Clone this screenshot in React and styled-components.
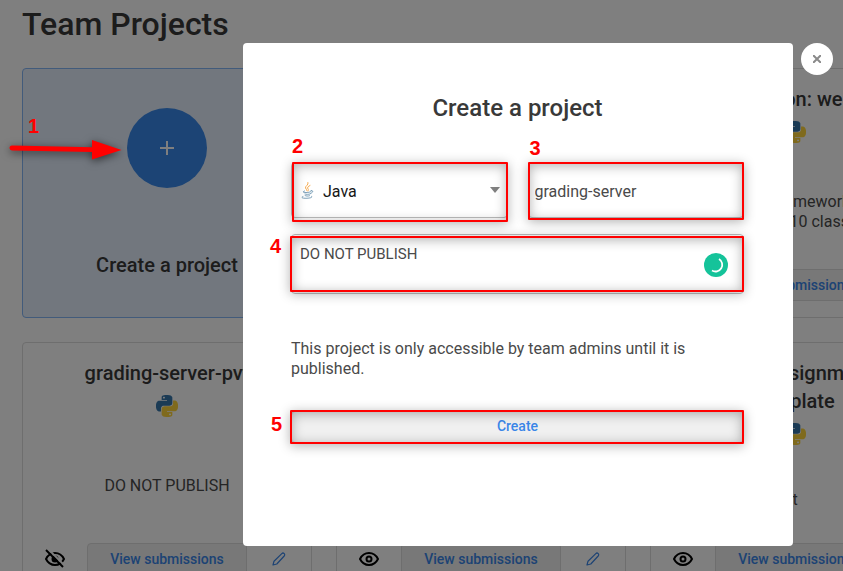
import React from 'react';
import styled, { createGlobalStyle, css } from 'styled-components';

const GlobalStyle = createGlobalStyle`
  * { box-sizing: border-box; }
  body {
    margin: 0;
    overflow: hidden;
    background: #ffffff;
    color: #393939;
    font-family: Roboto, "Liberation Sans", sans-serif;
    font-size: 16px;
    line-height: 20px;
  }
  button, input, select, textarea { font: inherit; color: inherit; margin: 0; }
`;

const BLUE = '#3a86e8';
const SOFT_TEXT = '#4a4a4a';

const Page = styled.div`
  position: relative;
  height: 100vh;
  overflow: hidden;
`;

const Projects = styled.main`
  padding: 4px 22px;
`;

const PageTitle = styled.h1`
  margin: 0 0 24px;
  font-size: 32px;
  line-height: 40px;
  font-weight: 500;
`;

const Grid = styled.div`
  display: grid;
  grid-template-columns: repeat(3, 290px);
  grid-auto-rows: 250px;
  gap: 24px;
`;

const cardFrame = css`
  display: flex;
  flex-direction: column;
  align-items: center;
  border: 1px solid #dcdcdc;
  border-radius: 4px;
  text-align: center;
`;

const CreateCard = styled.button`
  ${cardFrame}
  justify-content: space-between;
  padding: 39px 16px 38px;
  background: #e5effd;
  border-color: #84b6f6;
`;

const PlusCircle = styled.span`
  display: grid;
  place-items: center;
  width: 80px;
  height: 80px;
  border-radius: 50%;
  background: #3888ea;
`;

const CardTitle = styled.h2`
  margin: 0;
  padding: 0 16px;
  font-size: 20px;
  line-height: 28px;
  font-weight: 500;
  white-space: pre-line;
`;

const CreateLabel = styled.span`
  font-size: 20px;
  line-height: 28px;
  font-weight: 500;
`;

const Card = styled.article`
  ${cardFrame}
  padding-top: 16px;
`;

const Logo = styled.span`
  display: flex;
  margin-top: 8px;
`;

const CardText = styled.p`
  flex: 1;
  display: flex;
  align-items: center;
  margin: 0;
  padding: 12px 32px 0;
  color: ${SOFT_TEXT};
  white-space: pre-line;
`;

const CardFooter = styled.footer`
  display: grid;
  grid-template-columns: 64px 1fr 64px;
  align-self: stretch;
  height: 32px;
  margin-bottom: 16px;
`;

const IconButton = styled.button`
  display: grid;
  place-items: center;
  padding: 0;
  border: 0;
  background: none;
`;

const ViewLink = styled.a`
  border: 1px solid #dcdcdc;
  border-radius: 4px 4px 0 0;
  background: #f0f0f0;
  color: ${BLUE};
  font-size: 14px;
  line-height: 30px;
  font-weight: 500;
  text-decoration: none;
`;

const Overlay = styled.div`
  position: absolute;
  inset: 0;
  display: flex;
  align-items: flex-start;
  justify-content: flex-end;
  gap: 8px;
  padding: 43px 10px 24px;
  background: rgba(0, 0, 0, 0.5);
`;

const Dialog = styled.section`
  flex: 0 1 550px;
  padding: 49px 49px 103px 48px;
  border-radius: 4px;
  background: #ffffff;
`;

const CloseButton = styled.button`
  display: grid;
  place-items: center;
  width: 32px;
  height: 32px;
  padding: 0;
  border: 0;
  border-radius: 50%;
  background: #ffffff;
`;

const DialogTitle = styled.h2`
  margin: 0 0 38px;
  font-size: 24px;
  line-height: 32px;
  font-weight: 500;
  text-align: center;
`;

const Form = styled.form`
  display: flex;
  flex-direction: column;
`;

const FieldRow = styled.div`
  display: grid;
  grid-template-columns: 1fr 1fr;
  gap: 20px;
  margin-bottom: 16px;
`;

const Field = styled.div`
  position: relative;
  display: grid;
  align-items: center;
`;

const control = css`
  grid-area: 1 / 1;
  width: 100%;
  border: 1px solid #bdbdbd;
  border-radius: 4px;
  background: #ffffff;
  color: ${SOFT_TEXT};
  outline: 0;
`;

const Select = styled.select`
  ${control}
  height: 56px;
  padding: 4px 30px 0 31px;
  color: #161616;
  appearance: none;
`;

const SelectAdornments = styled.span`
  grid-area: 1 / 1;
  z-index: 1;
  display: flex;
  align-items: center;
  justify-content: space-between;
  padding: 0 8px 0 10px;
  pointer-events: none;
`;

const TextInput = styled.input`
  ${control}
  height: 56px;
  padding: 3px 6px 0;
`;

const TextArea = styled.textarea`
  ${control}
  display: block;
  height: 60px;
  padding: 9px 48px 9px 8px;
  font-size: 15px;
  resize: none;
`;

const Status = styled.span`
  grid-area: 1 / 1;
  justify-self: end;
  z-index: 1;
  display: flex;
  margin: 2px 16px 0 0;
`;

const Notice = styled.p`
  margin: 45px 0 32px;
  color: ${SOFT_TEXT};
`;

const SubmitButton = styled.button`
  width: 100%;
  height: 32px;
  padding: 0 0 2px;
  border: 1px solid #cfcfcf;
  border-radius: 4px;
  background: #f0f0f0;
  color: ${BLUE};
  font-size: 14px;
  font-weight: 500;
`;

const Highlight = styled.span`
  position: absolute;
  z-index: 2;
  inset: ${({ $inset }) => $inset};
  border: 2px solid #ff0000;
  border-radius: 1px;
  box-shadow: 0 2px 12px rgba(0, 0, 0, 0.3), inset 0 2px 12px rgba(0, 0, 0, 0.3);
  pointer-events: none;
`;

const Step = styled.span`
  position: absolute;
  z-index: 2;
  top: ${({ $top }) => $top};
  left: ${({ $left }) => $left};
  color: #ff0000;
  font: bold 20px/20px "Liberation Sans", sans-serif;
`;

const Arrow = styled.svg`
  position: absolute;
  z-index: 2;
  top: 130px;
  left: 0;
  filter: drop-shadow(0 2px 4px rgba(0, 0, 0, 0.6));
`;

function PythonLogo() {
  return (
    <svg width="22" height="22" viewBox="0 0 24 24" aria-label="Python">
      <path fill="#3776ab" d="M14.25.18l.9.2.73.26.59.3.45.32.34.34.25.34.16.33.1.3.04.26.02.2-.01.13V8.5l-.05.63-.13.55-.21.46-.26.38-.3.31-.33.25-.35.19-.35.14-.33.1-.3.07-.26.04-.21.02H8.77l-.69.05-.59.14-.5.22-.41.27-.33.32-.27.35-.2.36-.15.37-.1.35-.07.32-.04.27-.02.21v3.06H3.17l-.21-.03-.28-.07-.32-.12-.35-.18-.36-.26-.36-.36-.35-.46-.32-.59-.28-.73-.21-.88-.14-1.05-.05-1.23.06-1.22.16-1.04.24-.87.32-.71.36-.57.4-.44.42-.33.42-.24.4-.16.36-.1.32-.05.24-.01h.16l.06.01h8.16v-.83H6.18l-.01-2.75-.02-.37.05-.34.11-.31.17-.28.25-.26.31-.23.38-.2.44-.18.51-.15.58-.12.64-.1.71-.06.77-.04.84-.02 1.27.05zm-6.3 1.98l-.23.33-.08.41.08.41.23.34.33.22.41.09.41-.09.33-.22.23-.34.08-.41-.08-.41-.23-.33-.33-.22-.41-.09-.41.09z" />
      <path fill="#ffd43b" d="M21.04 6.11l.28.06.32.12.35.18.36.27.36.35.35.47.32.59.28.73.21.88.14 1.04.05 1.23-.06 1.23-.16 1.04-.24.86-.32.71-.36.57-.4.45-.42.33-.42.24-.4.16-.36.09-.32.05-.24.02-.16-.01h-8.22v.82h5.84l.01 2.76.02.36-.05.34-.11.31-.17.29-.25.25-.31.24-.38.2-.44.17-.51.15-.58.13-.64.09-.71.07-.77.04-.84.01-1.27-.04-1.07-.14-.9-.2-.73-.25-.59-.3-.45-.33-.34-.34-.25-.34-.16-.33-.1-.3-.04-.25-.02-.2.01-.13v-5.34l.05-.64.13-.54.21-.46.26-.38.3-.32.33-.24.35-.2.35-.14.33-.1.3-.06.26-.04.21-.02.13-.01h5.84l.69-.05.59-.14.5-.21.41-.28.33-.32.27-.35.2-.36.15-.36.1-.35.07-.32.04-.28.02-.21V6.07h2.09l.14.01zm-6.47 14.25l-.23.33-.08.41.08.41.23.33.33.23.41.08.41-.08.33-.23.23-.33.08-.41-.08-.41-.23-.33-.33-.23-.41-.08-.41.08z" />
    </svg>
  );
}

function JavaLogo() {
  return (
    <svg width="13" height="17" viewBox="0 0 26 34" fill="none" strokeLinecap="round" aria-hidden="true">
      <g stroke="#f5a03a" strokeWidth="1.800">
        <path d="M14 1c2 5-6 7-5 11 .5 2 3 3 3 5" />
        <path d="M18 7c-4 2-6 4-4 7 1 1 1 2 0 4" />
      </g>
      <g stroke="#5382a1" strokeWidth="1.500">
        <path d="M7 18c-5 2-3 3 3 3s8-1 10-2" />
        <path d="M20 17c5-1 5 4-1 6" />
        <path d="M8 24c2 1 7 1 10 0" />
        <path d="M8 27c2 1.500 6 1.500 9 .5" />
        <path d="M4 29c-6 2 0 4 8 3.500s12-2 9-4" />
      </g>
    </svg>
  );
}

function EyeIcon({ hidden }) {
  return (
    <svg width="22" height="22" viewBox="0 0 22 22" fill="none" stroke="#000000" strokeWidth="2" strokeLinejoin="round">
      <path d="M2 11C4 7 7.300 5 11 5s7 2 9 6c-2 4-5.300 6-9 6s-7-2-9-6z" />
      <circle cx="11" cy="11" r="2.500" fill={hidden ? '#000000' : 'none'} />
      {hidden && (
        <>
          <path d="M4 1l16 16" stroke="#ffffff" />
          <path d="M2 2l17 17" />
        </>
      )}
    </svg>
  );
}

function PencilIcon() {
  return (
    <svg width="14" height="14" viewBox="0 0 14 14" fill="none" stroke={BLUE} strokeWidth="1.200" strokeLinejoin="round">
      <path d="M1 13l1-3.800L9.800 1.600c.7-.7 1.700-.7 2.400 0s.7 1.700 0 2.400L4.800 12z" />
    </svg>
  );
}

function ProjectCard({ title, text, hidden }) {
  return (
    <Card>
      <CardTitle>{title}</CardTitle>
      <Logo><PythonLogo /></Logo>
      <CardText>{text}</CardText>
      <CardFooter>
        <IconButton aria-label="Toggle visibility"><EyeIcon hidden={hidden} /></IconButton>
        <ViewLink href="#submissions">View submissions</ViewLink>
        <IconButton aria-label="Edit project"><PencilIcon /></IconButton>
      </CardFooter>
    </Card>
  );
}

const projects = [
  { title: 'grading-server', text: 'Server' },
  { title: 'Introduction: web app', text: 'The web framework and\ncontains 10 classes' },
  { title: 'grading-server-pvt', text: 'DO NOT PUBLISH', hidden: true },
  { title: 'grading-server', text: 'Server' },
  { title: 'Final Assignment\ntemplate', text: 't' },
];

export default function App() {
  return (
    <Page>
      <GlobalStyle />
      <Projects>
        <PageTitle>Team Projects</PageTitle>
        <Grid>
          <CreateCard type="button">
            <PlusCircle>
              <svg width="16" height="16" viewBox="0 0 16 16" stroke="#ffffff" strokeWidth="2">
                <path d="M8 1v14M1 8h14" />
              </svg>
            </PlusCircle>
            <CreateLabel>Create a project</CreateLabel>
          </CreateCard>
          {projects.map((project, index) => <ProjectCard key={index} {...project} />)}
        </Grid>
      </Projects>

      <Overlay>
        <Dialog role="dialog" aria-labelledby="dialog-title">
          <DialogTitle id="dialog-title">Create a project</DialogTitle>
          <Form onSubmit={(event) => event.preventDefault()}>
            <FieldRow>
              <Field>
                <Select aria-label="Language" defaultValue="java">
                  <option value="java">Java</option>
                  <option value="python">Python</option>
                </Select>
                <SelectAdornments>
                  <JavaLogo />
                  <svg width="10" height="6" viewBox="0 0 10 6" fill="#808080"><path d="M0 0h10L5 6z" /></svg>
                </SelectAdornments>
                <Highlight $inset="0 0 -4px 1px" />
                <Step $top="-26px" $left="1px">2</Step>
              </Field>
              <Field>
                <TextInput aria-label="Project name" defaultValue="grading-server" />
                <Highlight $inset="0 0 -2px 0" />
                <Step $top="-24px" $left="2px">3</Step>
              </Field>
            </FieldRow>
            <Field>
              <TextArea aria-label="Description" defaultValue="DO NOT PUBLISH" spellCheck={false} />
              <Status>
                <svg width="24" height="24" viewBox="0 0 24 24" fill="none">
                  <circle cx="12" cy="12" r="12" fill="#15c39a" />
                  <path d="M15 6a6.500 6.500 0 0 1-7 11.500" stroke="#ffffff" strokeWidth="1.800" />
                </svg>
              </Status>
              <Highlight $inset="2px 0 2px -1px" />
              <Step $top="2px" $left="-21px">4</Step>
            </Field>
            <Notice>This project is only accessible by team admins until it is published.</Notice>
            <Field>
              <SubmitButton type="submit">Create</SubmitButton>
              <Highlight $inset="-1px 0 -1px -1px" />
              <Step $top="3px" $left="-20px">5</Step>
            </Field>
          </Form>
        </Dialog>
        <CloseButton type="button" aria-label="Close">
          <svg width="8" height="8" viewBox="0 0 8 8" stroke="#8a8a8a" strokeWidth="2"><path d="M0 0l8 8M8 0l-8 8" /></svg>
        </CloseButton>
      </Overlay>

      <Step $top="116px" $left="28px">1</Step>
      <Arrow width="130" height="40" viewBox="0 0 130 40" fill="#ff0000">
        <path d="M12 15.500L92 17.200V10L121.500 20 92 29.500V22L12 20.500a2.500 2.500 0 0 1 0-5z" />
      </Arrow>
    </Page>
  );
}
